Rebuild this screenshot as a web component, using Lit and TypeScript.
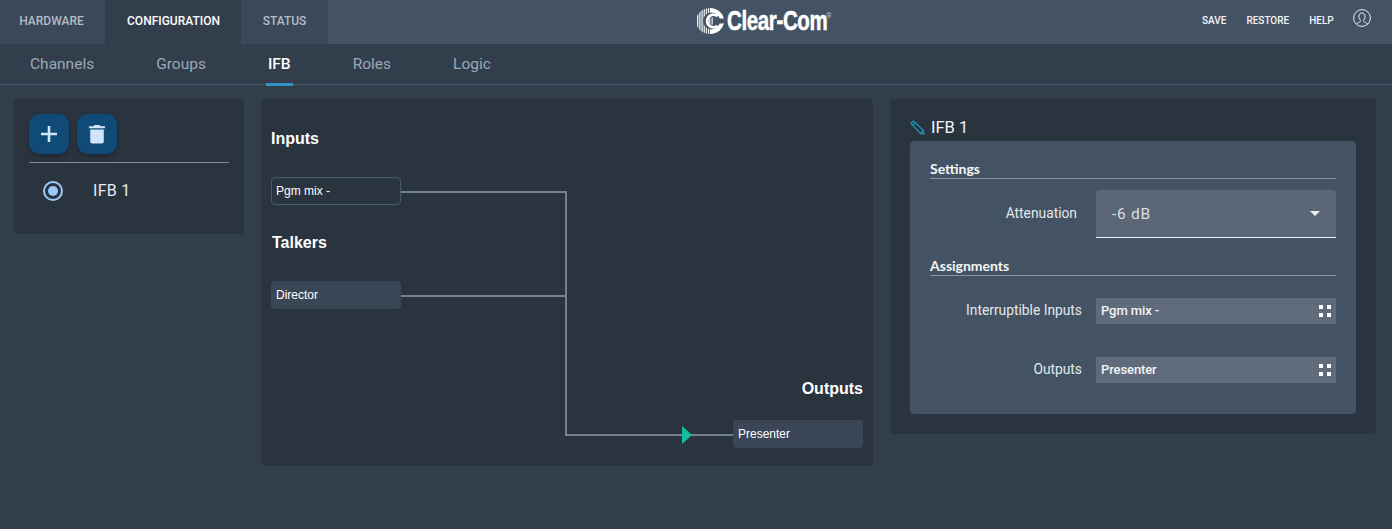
import {css, html, LitElement, svg} from "lit";
import {customElement} from "lit/decorators.js";

const GRID = html`<svg class="grid" width="12" height="12" viewBox="0 0 12 12"><path fill="#fff" d="M0 0h4v4H0zM8 0h4v4H8zM0 8h4v4H0zM8 8h4v4H8z"/></svg>`;

// logo stripes: vertical bars clipped to a disc, the C sits on top
const BARS = [1, 3.2, 5.4, 7.6, 9.8, 12];

@customElement("app-root")
class AppRoot extends LitElement {
    static styles = css`
    :host {
        display: block;
        height: 529px;
        background: #323e4c;
        color: #fff;
        font-family: Roboto, "Liberation Sans", sans-serif;
        overflow: hidden;
    }

    .top {
        height: 44px;
        background: #435363;
        display: flex;
        align-items: stretch;
    }
    .top-tab {
        display: flex;
        align-items: center;
        justify-content: center;
        background: #3a4858;
        color: #b4bdc6;
        font-size: 12px;
        font-weight: 500;
        padding-bottom: 2px;
        box-sizing: border-box;
    }
    .top-tab.hw { width: 105px; padding-right: 2px; }
    .top-tab.cfg { width: 136px; background: #323e4c; color: #fff; padding-left: 1px; }
    .top-tab.st { width: 87px; }

    .logo {
        width: 874px;
        display: flex;
        align-items: center;
        padding: 0 0 3px 368px;
        box-sizing: border-box;
    }
    .logo svg { margin-right: 3px; flex: none; }
    .logo-text {
        font-family: "Liberation Sans", sans-serif;
        font-weight: 700;
        font-size: 27px;
        letter-spacing: -0.5px;
        line-height: 30px;
        color: #fff;
        -webkit-text-stroke: .5px #fff;
        display: inline-block;
        width: 99px;
        transform: scaleX(.76);
        transform-origin: left center;
        white-space: nowrap;
    }
    .logo-reg {
        font-size: 7px;
        color: #b9c1c9;
        align-self: flex-start;
        margin-top: 12px;
    }

    .actions {
        flex: 1;
        display: flex;
        align-items: center;
        gap: 20px;
        font-size: 10px;
        font-weight: 500;
        color: #f2f5f7;
        padding: 0 0 3px 0;
    }
    .user { margin: -5px 0 0 -1px; }

    .sub {
        height: 41px;
        border-bottom: 1px solid #4a5e70;
        box-sizing: border-box;
        display: flex;
        align-items: flex-start;
        padding-left: 30px;
        gap: 62px;
        font-size: 15.5px;
        color: #99a8b5;
    }
    .sub a {
        display: block;
        height: 42px;
        line-height: 41px;
        box-sizing: border-box;
    }
    .sub a.on {
        color: #fff;
        font-weight: 500;
        border-bottom: 3px solid #3591c9;
        margin: 0 -2px;
        padding: 0 2px;
    }

    .main {
        display: flex;
        align-items: flex-start;
        padding: 14px 16px 0 14px;
    }
    .panel {
        background: #2a343f;
        border-radius: 4px;
        box-sizing: border-box;
    }

    .list {
        width: 230px;
        height: 135px;
        padding: 15px 15px 0;
        margin-right: 17px;
    }
    .tools {
        display: flex;
        gap: 8px;
        padding-bottom: 8px;
        border-bottom: 1px solid #84898f;
    }
    .tool {
        width: 40px;
        height: 40px;
        border-radius: 11px;
        background: #104b78;
        box-shadow: 0 2px 5px rgba(0, 0, 0, .3);
        display: flex;
        align-items: center;
        justify-content: center;
    }
    .row {
        display: flex;
        align-items: center;
        height: 56px;
        padding-left: 14px;
        font-size: 16px;
        color: #e8ecef;
        letter-spacing: .3px;
    }
    .row svg { margin-right: 30px; }
    .row span { padding-bottom: 1px; }

    .diagram {
        width: 612px;
        height: 367px;
        margin-right: 17px;
        position: relative;
    }
    .diagram h3 {
        position: absolute;
        margin: 0;
        font-family: "Liberation Sans", sans-serif;
        font-size: 16px;
        font-weight: 700;
        line-height: 18px;
    }
    .node {
        position: absolute;
        width: 130px;
        height: 28px;
        box-sizing: border-box;
        border-radius: 4px;
        background: #3a4656;
        font-family: "Liberation Sans", sans-serif;
        font-size: 12px;
        line-height: 28px;
        padding-left: 5px;
    }
    .node.outline {
        background: transparent;
        border: 1px solid #46586c;
        line-height: 26px;
        padding-left: 4px;
    }
    .wires { position: absolute; left: 0; top: 0; }

    .detail {
        width: 486px;
        height: 335px;
        padding: 15px 20px 0;
    }
    .title {
        display: flex;
        align-items: center;
        gap: 6px;
        height: 27px;
        font-size: 16.5px;
        color: #f3f5f7;
    }
    .card {
        background: #435363;
        border-radius: 4px;
        height: 273px;
        padding: 20px;
        box-sizing: border-box;
    }
    .card h4 {
        margin: 0;
        font-family: Lato, sans-serif;
        font-size: 14px;
        font-weight: 700;
        line-height: 15px;
        padding-bottom: 2px;
        color: #f4f6f8;
        border-bottom: 1px solid #8795a3;
    }
    .field {
        display: flex;
        align-items: center;
    }
    .field label {
        width: 152px;
        margin-right: 14px;
        padding-bottom: 2px;
        text-align: right;
        font-size: 13.8px;
        color: #e4e8ec;
        flex: none;
    }
    .atten { height: 48px; margin: 11px 0 20px; }
    .atten label { width: 147px; margin-right: 19px; padding-bottom: 3px; }
    .select {
        flex: 1;
        height: 48px;
        box-sizing: border-box;
        background: #5b6777;
        border-bottom: 1px solid #eef1f4;
        border-radius: 4px 4px 0 0;
        display: flex;
        align-items: center;
        justify-content: space-between;
        padding: 0 16px 0 16px;
        font-size: 15.5px;
        letter-spacing: .7px;
        color: #d8dde2;
    }
    .caret {
        width: 0;
        height: 0;
        border-left: 5px solid transparent;
        border-right: 5px solid transparent;
        border-top: 5px solid #eef1f4;
    }
    .assign { height: 26px; }
    .assign.first { margin-top: 22px; }
    .assign.second { margin-top: 33px; }
    .picker {
        flex: 1;
        height: 26px;
        background: #5f6b7b;
        display: flex;
        align-items: center;
        justify-content: space-between;
        padding: 0 5px;
        font-size: 13px;
        font-weight: 500;
        letter-spacing: -.1px;
        color: #f2f4f6;
        box-sizing: border-box;
    }
    .picker span { padding-bottom: 1px; }
    `;

    render() {
        return html`
            <div class="top">
                <div class="top-tab hw">HARDWARE</div>
                <div class="top-tab cfg">CONFIGURATION</div>
                <div class="top-tab st">STATUS</div>
                <div class="logo">
                    <svg width="28" height="26" viewBox="0 0 28 26">
                        <defs>
                            <clipPath id="disc"><ellipse cx="14" cy="13" rx="14" ry="13"/></clipPath>
                        </defs>
                        <g clip-path="url(#disc)">
                            ${BARS.map((x) => svg`<rect x=${x} y="0" width="1.3" height="26" fill="#e9edf0"/>`)}
                            <path d="M14 0H28V26H14z" fill="#fff"/>
                            <circle cx="15.500" cy="13" r="8.500" fill="#435363"/>
                            <path d="M21.500 8.200A6.300 6.300 0 1 0 21.500 17.800" fill="none" stroke="#fff" stroke-width="2.800"/>
                            <path d="M13 9.500h1.300v7H13zM15.500 9.500h1.300v7h-1.300z" fill="#dfe4e8"/>
                            <path d="M22 10.500h6v5h-6z" fill="#435363"/>
                        </g>
                    </svg>
                    <span class="logo-text">Clear-Com</span>
                    <span class="logo-reg">®</span>
                </div>
                <div class="actions">
                    <span>SAVE</span><span>RESTORE</span><span>HELP</span>
                    <svg class="user" width="18" height="18" viewBox="0 0 18 18" fill="none" stroke="#e6eaee" stroke-width="1">
                        <circle cx="9" cy="9" r="8.400"/>
                        <path d="M3.600 15c1-1.600 3-1.600 3.700-2.600.4-.6.2-1.100-.4-1.900-.8-1-1.100-2.100-1-3.300C6.100 5.300 7.400 3.900 9 3.900s2.900 1.400 3.100 3.300c.1 1.200-.2 2.300-1 3.300-.6.800-.8 1.300-.4 1.900.7 1 2.700 1 3.700 2.600"/>
                    </svg>
                </div>
            </div>

            <nav class="sub">
                <a>Channels</a><a>Groups</a><a class="on">IFB</a><a>Roles</a><a>Logic</a>
            </nav>

            <div class="main">
                <section class="panel list">
                    <div class="tools">
                        <div class="tool">
                            <svg width="16" height="16" viewBox="0 0 16 16"><path fill="#d0e4fb" d="M6.700 0h2.600v6.700H16v2.600H9.300V16H6.700V9.300H0V6.700h6.700z"/></svg>
                        </div>
                        <div class="tool">
                            <svg width="16" height="19" viewBox="0 0 16 19"><path fill="#d0e4fb" d="M5.500 0h5l1 1.200H16v2H0v-2h4.500zM1.200 4.500h13.600V16.500a2 2 0 0 1-2 2H3.200a2 2 0 0 1-2-2z"/></svg>
                        </div>
                    </div>
                    <div class="row">
                        <svg width="20" height="20" viewBox="0 0 20 20">
                            <circle cx="10" cy="10" r="9" fill="none" stroke="#9ccbfb" stroke-width="2"/>
                            <circle cx="10" cy="10" r="5" fill="#9ccbfb"/>
                        </svg>
                        <span>IFB 1</span>
                    </div>
                </section>

                <section class="panel diagram">
                    <svg class="wires" width="612" height="367" fill="none" stroke="#738190" stroke-width="2">
                        <path d="M140 93H305V336H472"/>
                        <path d="M140 197H305"/>
                        <path fill="#15bd9c" stroke="none" d="M421 327L431 336L421 345z"/>
                    </svg>
                    <h3 style="left:10px;top:31px">Inputs</h3>
                    <div class="node outline" style="left:10px;top:78px">Pgm mix -</div>
                    <h3 style="left:11px;top:135px">Talkers</h3>
                    <div class="node" style="left:10px;top:182px">Director</div>
                    <h3 style="right:10px;top:281px">Outputs</h3>
                    <div class="node" style="left:472px;top:321px">Presenter</div>
                </section>

                <section class="panel detail">
                    <div class="title">
                        <svg width="15" height="15" viewBox="0 0 15 15" fill="none" stroke="#1f9bc4" stroke-width="1.100">
                            <path d="M1 3.500L3.500 1 13.500 10.500 14 14 10.500 13.500zM2.800 5.300l2.500-2.500M10.800 13l2.400-2.400"/>
                        </svg>
                        <span>IFB 1</span>
                    </div>
                    <div class="card">
                        <h4>Settings</h4>
                        <div class="field atten">
                            <label>Attenuation</label>
                            <div class="select"><span>-6 dB</span><span class="caret"></span></div>
                        </div>
                        <h4>Assignments</h4>
                        <div class="field assign first">
                            <label>Interruptible Inputs</label>
                            <div class="picker"><span>Pgm mix -</span>${GRID}</div>
                        </div>
                        <div class="field assign second">
                            <label>Outputs</label>
                            <div class="picker"><span>Presenter</span>${GRID}</div>
                        </div>
                    </div>
                </section>
            </div>
        `;
    }
}
